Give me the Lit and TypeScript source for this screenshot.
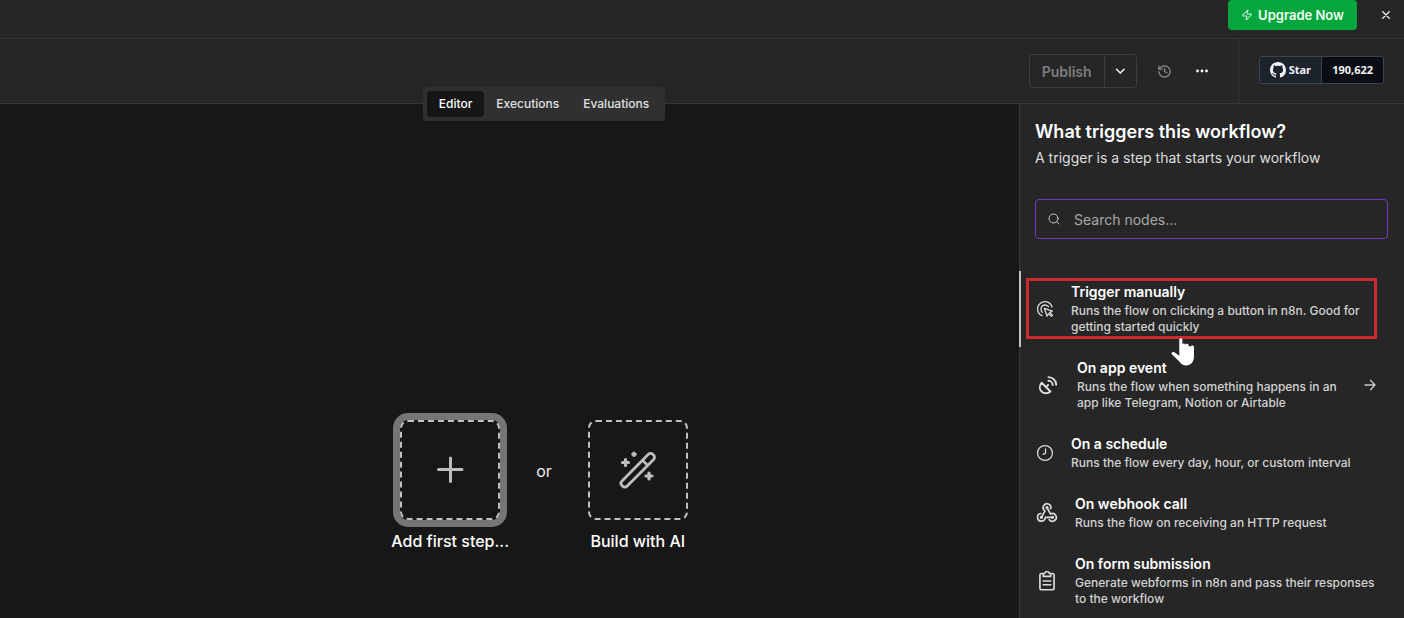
import { LitElement, html, css, svg, nothing, type TemplateResult } from "lit";
import { customElement, property } from "lit/decorators.js";

interface TriggerItem {
  title: string;
  description: string;
  icon: TemplateResult;
  iconSize: number;
  active?: boolean;
  nested?: boolean;
}

const clickIcon = svg`
  <g stroke-width="1.900">
    <path d="M7.500 22A11 11 0 1 1 22.500 9M8 17A6.300 6.300 0 1 1 17.300 8.600"/>
    <path d="M11 11l12 4.200-4 2 4.200 4.200-1.700 1.700-4.200-4.200-2.200 4z"/>
  </g>`;
const dishIcon = svg`
  <g transform="translate(1.600 2.400) scale(.84)" stroke-width="2.500">
    <path d="M4.200 8.500 15.500 19.800C12 23.200 7 22.800 4 19.800S1 12 4.200 8.500z"/>
    <path d="m9.800 14.200 2.700-2.700"/>
    <path d="M13 6a5.500 5.500 0 0 1 5.500 5.500M13 1.200a10 10 0 0 1 10 10"/>
  </g>`;
const clockIcon = svg`
  <g stroke-width="1.900"><circle cx="12" cy="12" r="11.200"/><path d="M12.800 6v6.500l-3.600 1.600"/></g>`;
const webhookIcon = svg`
  <path d="M16.400 6.900A4.600 4.600 0 1 0 9.500 9.400L5.500 17"/>
  <path d="M4.600 12.600A4.600 4.600 0 1 0 9.900 17.200H18.500"/>
  <path d="M14.800 20A4.600 4.600 0 1 0 16.200 13.200L12 5.500"/>
  <circle cx="12" cy="5.500" r="1"/><circle cx="5.300" cy="17.200" r="1"/><circle cx="18.700" cy="17.200" r="1"/>`;
const clipboardIcon = svg`
  <path d="M7.500 3H5.500a2 2 0 0 0-2 2v15.500a2 2 0 0 0 2 2h13a2 2 0 0 0 2-2V5a2 2 0 0 0-2-2h-2"/>
  <path d="M7.500 6.500V3.500L9.500 2.500a2.600 2.600 0 0 1 5 0L16.500 3.500V6.500z"/>
  <path d="M7.500 12h9M7.500 16.500h9"/>`;

const TRIGGERS: TriggerItem[] = [
  {
    title: "Trigger manually",
    description: "Runs the flow on clicking a button in n8n. Good for getting started quickly",
    icon: clickIcon,
    iconSize: 16,
    active: true,
  },
  {
    title: "On app event",
    description: "Runs the flow when something happens in an app like Telegram, Notion or Airtable",
    icon: dishIcon,
    iconSize: 22,
    nested: true,
  },
  {
    title: "On a schedule",
    description: "Runs the flow every day, hour, or custom interval",
    icon: clockIcon,
    iconSize: 16,
  },
  {
    title: "On webhook call",
    description: "Runs the flow on receiving an HTTP request",
    icon: webhookIcon,
    iconSize: 20,
  },
  {
    title: "On form submission",
    description: "Generate webforms in n8n and pass their responses to the workflow",
    icon: clipboardIcon,
    iconSize: 20,
  },
];

const reset = css`
  :host, * { box-sizing: border-box; }
  :host { stroke-width: 2; }
  button, input { font: inherit; color: inherit; background: none; border: 0; margin: 0; padding: 0; }
  button { cursor: pointer; }
  svg { display: block; flex: none; fill: none; stroke: currentColor; stroke-linecap: round; stroke-linejoin: round; overflow: visible; }
`;

@customElement("upgrade-banner")
export class UpgradeBanner extends LitElement {
  static styles = [reset, css`
    :host { display: flex; justify-content: flex-end; align-items: flex-start; gap: 22px; height: 39px; padding-right: 11px; border-bottom: 1px solid #333; }
    .upgrade { display: flex; align-items: center; gap: 5px; height: 30px; padding: 0 13px; border-radius: 4px; background: #06a63f; color: #effff3; font-size: 13px; font-weight: 600; line-height: 20px; }
    .close { display: grid; place-items: center; width: 14px; height: 30px; color: #eee; }
  `];

  render() {
    return html`
      <button class="upgrade">
        <svg width="12" height="12" viewBox="0 0 24 24"><path d="M4 14a1 1 0 0 1-.78-1.630l9.900-10.200a.5.5 0 0 1 .86.460l-1.920 6.020A1 1 0 0 0 13 10h7a1 1 0 0 1 .78 1.630l-9.900 10.200a.5.5 0 0 1-.86-.460l1.920-6.020A1 1 0 0 0 11 14z"/></svg>
        Upgrade Now
      </button>
      <button class="close" aria-label="Close">
        <svg width="12" height="12" viewBox="0 0 24 24" stroke-width="2.600"><path d="M18.500 5.500l-13 13M5.500 5.500l13 13"/></svg>
      </button>`;
  }
}

@customElement("workflow-header")
export class WorkflowHeader extends LitElement {
  static styles = [reset, css`
    :host { display: flex; justify-content: flex-end; height: 65px; border-bottom: 1px solid #383838; }
    .actions { display: flex; align-items: center; padding-right: 29px; border-right: 1px solid #333; }
    .split { display: flex; height: 34px; margin-right: 20px; border: 1px solid #3e3e3e; border-radius: 4px; }
    .publish { padding: 0 12px; color: #7d7d7d; font-size: 14px; font-weight: 600; cursor: default; }
    .more { display: grid; place-items: center; width: 32px; border-left: 1px solid #3e3e3e; color: #eee; }
    .history { color: #8a8a8a; margin-right: 23px; }
    .dots { color: #fff; }
    .dots svg { fill: currentColor; stroke: none; }
    .github { display: flex; align-items: center; padding: 0 20px 2px; }
    .star { display: flex; height: 28px; color: #f0f3f6; font-family: "Open Sans", "Noto Sans", sans-serif; font-size: 11px; font-weight: 700; line-height: 26px; border: 1px solid #3d444d; border-radius: 3px; overflow: hidden; }
    .star a { display: flex; align-items: center; gap: 3px; color: inherit; text-decoration: none; }
    .label { padding: 0 10px; background: #1c232c; border-right: 1px solid #3d444d; }
    .count { padding: 0 10px; background: #0a0e14; }
    .label svg { fill: currentColor; stroke: none; }
  `];

  render() {
    return html`
      <div class="actions">
        <div class="split">
          <button class="publish" disabled>Publish</button>
          <button class="more" aria-label="Publish options">
            <svg width="14" height="14" viewBox="0 0 24 24" stroke-width="2.800"><path d="m6 9 6.500 6.500L19 9"/></svg>
          </button>
        </div>
        <button class="history" aria-label="Version history">
          <svg width="15" height="15" viewBox="0 0 24 24"><path d="M3 12a9 9 0 1 0 9-9 9.750 9.750 0 0 0-6.740 2.740L3 8"/><path d="M3 3v5h5M12 7v5l4 2"/></svg>
        </button>
        <button class="dots" aria-label="More actions">
          <svg width="14" height="14" viewBox="0 0 14 14"><circle cx="2.500" cy="7" r="1.400"/><circle cx="7" cy="7" r="1.400"/><circle cx="11.500" cy="7" r="1.400"/></svg>
        </button>
      </div>
      <div class="github">
        <div class="star">
          <a class="label" href="#star">
            <svg width="16" height="16" viewBox="0 0 16 16"><path d="M8 0C3.580 0 0 3.580 0 8c0 3.540 2.290 6.530 5.470 7.590.4.070.55-.17.55-.38 0-.19-.01-.82-.01-1.490-2.010.37-2.530-.49-2.690-.94-.09-.23-.48-.94-.82-1.130-.28-.15-.68-.52-.01-.53.63-.01 1.080.58 1.230.82.72 1.210 1.870.87 2.330.66.070-.52.28-.87.51-1.070-1.780-.2-3.640-.89-3.640-3.950 0-.87.31-1.590.82-2.150-.08-.2-.36-1.020.08-2.120 0 0 .67-.21 2.200.82.64-.18 1.320-.27 2-.27s1.360.09 2 .27c1.530-1.040 2.200-.82 2.200-.82.44 1.100.16 1.920.08 2.120.51.56.82 1.270.82 2.150 0 3.070-1.870 3.750-3.650 3.950.29.25.54.73.54 1.480 0 1.070-.01 1.930-.01 2.200 0 .21.15.46.55.38A8.010 8.010 0 0 0 16 8c0-4.420-3.580-8-8-8z"/></svg>
            Star
          </a>
          <a class="count" href="#stargazers">190,622</a>
        </div>
      </div>`;
  }
}

@customElement("workflow-canvas")
export class WorkflowCanvas extends LitElement {
  static styles = [reset, css`
    :host { position: relative; display: flex; align-items: center; justify-content: center; padding: 249px 0 0 69px; background: #171717; }
    .tabbar { position: absolute; top: -17px; left: 69px; right: 0; display: flex; justify-content: center; }
    .tabs { display: flex; padding: 4px; border-radius: 4px; background: #303030; }
    .tab { height: 26px; padding: 0 12px; border-radius: 4px; color: #e0e0e0; font-size: 12px; font-weight: 500; line-height: 26px; }
    .tab.on { background: #161616; color: #fff; }
    .start { display: flex; gap: 36px; font-size: 16px; line-height: 22px; }
    .choice { display: flex; flex-direction: column; align-items: center; gap: 10px; width: 100px; color: #fff; font-weight: 500; white-space: nowrap; }
    .box { display: grid; place-items: center; width: 100px; height: 100px; border: 2px dashed #c0c0c0; border-radius: 8px; color: #bdbdbd; }
    .focused .box { box-shadow: 0 0 0 7px #757575; }
    .or { height: 102px; display: flex; align-items: center; color: #eee; }
  `];

  render() {
    return html`
      <div class="tabbar">
        <nav class="tabs" role="tablist">
          <button class="tab on" role="tab" aria-selected="true">Editor</button>
          <button class="tab" role="tab" aria-selected="false">Executions</button>
          <button class="tab" role="tab" aria-selected="false">Evaluations</button>
        </nav>
      </div>
      <div class="start">
        <button class="choice focused">
          <span class="box"><svg width="40" height="40" viewBox="0 0 40 40" stroke-width="3"><path d="M20.500 8v23.500M8.500 19.500H32"/></svg></span>
          <span>Add first step...</span>
        </button>
        <span class="or">or</span>
        <button class="choice">
          <span class="box">
            <svg width="40" height="40" viewBox="0 0 40 40">
              <path stroke-width="2.800" d="M3.800 31.200 30.400 4.200a3 3 0 0 1 4.300 0l.9.900a3 3 0 0 1 0 4.300L9 36.200a3 3 0 0 1-4.300 0l-.9-.9a3 3 0 0 1 0-4.100zM24.500 10.300l5 5"/>
              <path stroke-width="3.200" d="M7.500 9.500v6M4.500 12.500h6M16 3v2.400M14.800 4.200h2.400M31 23v6M28 26h6"/>
            </svg>
          </span>
          <span>Build with AI</span>
        </button>
      </div>`;
  }
}

@customElement("trigger-row")
export class TriggerRow extends LitElement {
  @property({ attribute: false }) item!: TriggerItem;

  static styles = [reset, css`
    :host { display: block; }
    .row { position: relative; display: flex; align-items: center; gap: 18px; width: 100%; padding: 12px 28px 12px 17px; text-align: left; }
    .row.active::before { content: ""; position: absolute; left: -1px; top: 0; bottom: 0; width: 2px; background: #c4c4c4; }
    .icon { color: #dcdcdc; }
    .text { flex: 1; display: flex; flex-direction: column; gap: 2px; }
    .title { color: #fff; font-size: 14px; font-weight: 600; line-height: 18px; }
    .desc { color: #d2d2d2; font-size: 12px; font-weight: 500; line-height: 16px; }
    .arrow { color: #c8c8c8; }
  `];

  render() {
    const { title, description, icon, iconSize, active, nested } = this.item;
    return html`
      <button class="row ${active ? "active" : ""}">
        <svg class="icon" width=${iconSize} height=${iconSize} viewBox="0 0 24 24">${icon}</svg>
        <span class="text">
          <span class="title">${title}</span>
          <span class="desc">${description}</span>
        </span>
        ${nested
          ? html`<svg class="arrow" width="12" height="12" viewBox="0 0 12 12" stroke-width="1.300"><path d="M1 6h10M6.500 1.300 11 6l-4.500 4.700"/></svg>`
          : nothing}
      </button>`;
  }
}

@customElement("trigger-panel")
export class TriggerPanel extends LitElement {
  static styles = [reset, css`
    :host { display: block; border-left: 1px solid #383838; background: #262626; }
    .head { padding: 16px 15px 0; }
    h1 { margin: 0; color: #fff; font-size: 18px; font-weight: 600; line-height: 24px; }
    p { margin: 4px 0 0; color: #dedede; font-size: 14px; line-height: 20px; }
    .search { display: flex; align-items: center; gap: 14px; height: 40px; margin: 31px 16px 32px 15px; padding: 0 12px; border: 1px solid #6e3cc0; border-radius: 4px; color: #c8c8c8; }
    .search input { flex: 1; min-width: 0; height: 38px; font-size: 14px; outline: none; }
    .search input::placeholder { color: #a8a8a8; opacity: 1; }
    .list { position: relative; }
    .highlight { position: absolute; left: 6px; right: 27px; top: 7px; height: 61px; border: 3px solid #cb2b30; pointer-events: none; }
    .pointer { position: absolute; left: 151px; top: 67px; fill: #fff; stroke: none; pointer-events: none; }
  `];

  render() {
    return html`
      <div class="head">
        <h1>What triggers this workflow?</h1>
        <p>A trigger is a step that starts your workflow</p>
      </div>
      <label class="search">
        <svg width="12" height="12" viewBox="0 0 24 24"><circle cx="11" cy="11" r="9"/><path d="m22 22-4.500-4.500"/></svg>
        <input type="text" placeholder="Search nodes..." aria-label="Search nodes" />
      </label>
      <div class="list">
        ${TRIGGERS.map((item) => html`<trigger-row .item=${item}></trigger-row>`)}
        <div class="highlight"></div>
        <svg class="pointer" width="24" height="28" viewBox="0 0 24 28"><path d="M8.300 1.500a1.600 1.600 0 0 1 3.100 0V6.500a1.500 1.500 0 0 1 2.900.2v.6a1.600 1.600 0 0 1 3.300.4v.8a1.600 1.600 0 0 1 2.200.2 1.500 1.500 0 0 1 3.200.8v8.500c0 6-3.200 9.500-7.700 9.500-3.200 0-5-1.300-6.700-3.800L.8 16.200c-.9-1.700 1.300-2.800 2.900-1.700l4.600 3.300z"/></svg>
      </div>`;
  }
}

@customElement("app-root")
export class AppRoot extends LitElement {
  static styles = css`
    :host { display: flex; flex-direction: column; min-height: 100vh; background: #262626; color: #fff; font-family: Inter, "Liberation Sans", sans-serif; overflow: hidden; }
    .workspace { flex: 1; display: grid; grid-template-columns: minmax(0, 1fr) 385px; }
  `;

  render() {
    return html`
      <upgrade-banner></upgrade-banner>
      <workflow-header></workflow-header>
      <div class="workspace">
        <workflow-canvas></workflow-canvas>
        <trigger-panel></trigger-panel>
      </div>`;
  }
}
